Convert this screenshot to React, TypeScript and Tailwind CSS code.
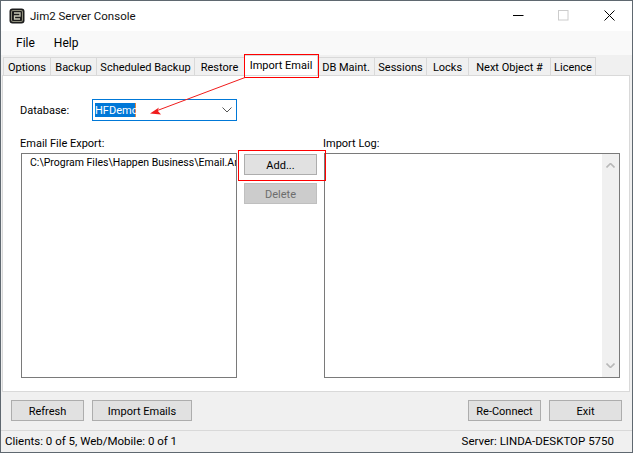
import React from "react";

const tabs = [
  { label: "Options", width: "w-[48px]" },
  { label: "Backup", width: "w-[46px]" },
  { label: "Scheduled Backup", width: "w-[98px]" },
  { label: "Restore", width: "w-[50px]" },
  { label: "Import Email", width: "w-[73px]", active: true },
  { label: "DB Maint.", width: "w-[57px]" },
  { label: "Sessions", width: "w-[52px]" },
  { label: "Locks", width: "w-[42px]" },
  { label: "Next Object #", width: "w-[82px]" },
  { label: "Licence", width: "w-[45px]" },
];

function WinButton({ label, className, disabled }: { label: string; className: string; disabled?: boolean }) {
  return (
    <div
      className={`flex items-center justify-center border pt-[1px] ${
        disabled ? "border-[#bfbfbf] bg-[#cccccc] text-[#6d6d6d]" : "border-[#adadad] bg-[#e1e1e1] text-black"
      } ${className}`}
    >
      {label}
    </div>
  );
}

export default function App() {
  return (
    <div
      className="relative flex h-[453px] w-[633px] flex-col overflow-hidden border border-[#5f6870] bg-white text-[11px] leading-none text-black"
      style={{ fontFamily: 'Roboto, "Noto Sans", sans-serif' }}
    >
      {/* Title bar */}
      <div className="flex h-[30px] shrink-0 items-center bg-white">
        <svg className="ml-[8px] h-[16px] w-[16px]" viewBox="0 0 16 16">
          <rect x="0.5" y="0.5" width="15" height="15" rx="3" fill="#1c1c1c" />
          <rect x="2" y="2" width="12" height="12" rx="2" fill="#8e8e7c" />
          <rect x="3" y="3" width="10" height="10" rx="1" fill="#1c1c1c" />
          <path d="M5 5h6v3H5.5v3H11" fill="none" stroke="#c9c9b6" strokeWidth="1.3" />
        </svg>
        <span className="ml-[5px] pt-[1px] text-[11.5px] text-[#111]">Jim2 Server Console</span>
        <div className="ml-auto flex h-full items-center pb-[2px] text-black">
          <svg className="h-[11px] w-[11px]" viewBox="0 0 11 11">
            <path d="M0 5.5h10.5" stroke="#000" strokeWidth="1" />
          </svg>
          <svg className="ml-[34px] h-[11px] w-[11px]" viewBox="0 0 11 11">
            <rect x="0.5" y="0.5" width="9.5" height="9.5" fill="none" stroke="#cccccc" />
          </svg>
          <svg className="ml-[35px] mr-[17px] h-[11px] w-[11px]" viewBox="0 0 11 11">
            <path d="M0.5 0.5l10 10M10.5 0.5l-10 10" stroke="#000" strokeWidth="1" />
          </svg>
        </div>
      </div>

      {/* Menu bar */}
      <div className="flex h-[24px] shrink-0 items-center gap-[19px] bg-[#f9f9f9] pl-[15px] text-[12px]">
        <span>File</span>
        <span>Help</span>
      </div>

      {/* Tabs */}
      <div className="flex h-[20px] shrink-0 items-end bg-[#f0f0f0] pl-[2px]">
        {tabs.map((tab) => (
          <div
            key={tab.label}
            className={`flex items-center justify-center border-t border-r border-[#d9d9d9] ${tab.width} ${
              tab.active ? "h-[20px] bg-white pb-[1px]" : "h-[18px] bg-[#f0f0f0] pt-[1px]"
            } ${tab.label === "Options" ? "border-l" : ""}`}
          >
            <span className="whitespace-nowrap">{tab.label}</span>
          </div>
        ))}
      </div>

      {/* Page */}
      <div className="flex-1 bg-[#f0f0f0]">
        <div className="mr-[2px] ml-[1px] flex h-[317px] flex-col border border-[#d9d9d9] bg-white">
          <div className="mt-[23px] flex items-center pl-[17px]">
            <span className="w-[72px]">Database:</span>
            <div className="flex h-[22px] w-[145px] items-center border border-[#0078d7] pl-[2px] pr-[4px]">
              <span className="flex h-[14px] w-[41px] items-center border-r border-[#e8853a] bg-[#0078d7] text-white">HFDemo</span>
              <svg className="ml-auto h-[6px] w-[10px]" viewBox="0 0 10 6">
                <path d="M0.5 0.5l4.5 4.5 4.5-4.5" fill="none" stroke="#555" strokeWidth="1" />
              </svg>
            </div>
          </div>

          <div className="mt-[17px] flex h-[12px] pl-[17px]">
            <span className="w-[303px]">Email File Export:</span>
            <span>Import Log:</span>
          </div>

          <div className="mt-[3px] flex items-start pl-[18px]">
            <div className="h-[225px] w-[216px] overflow-hidden border border-[#7a7a7a] pl-[8px] pt-[2px]">
              <span className="block whitespace-nowrap text-[10.5px] leading-[14px]">C:\Program Files\Happen Business\Email.Ar</span>
            </div>
            <div className="ml-[7px] flex w-[73px] flex-col gap-[8px] pt-[1px]">
              <WinButton label="Add..." className="h-[21px]" />
              <WinButton label="Delete" className="h-[21px]" disabled />
            </div>
            <div className="ml-[7px] flex h-[225px] w-[296px] justify-end border border-[#7a7a7a]">
              <div className="flex w-[17px] flex-col items-center justify-between bg-[#f0f0f0] py-[9px]">
                <svg className="h-[5px] w-[9px]" viewBox="0 0 9 5">
                  <path d="M0.5 4.5l4-4 4 4" fill="none" stroke="#b8b8b8" strokeWidth="1.6" />
                </svg>
                <svg className="h-[5px] w-[9px]" viewBox="0 0 9 5">
                  <path d="M0.5 0.5l4 4 4-4" fill="none" stroke="#b8b8b8" strokeWidth="1.6" />
                </svg>
              </div>
            </div>
          </div>
        </div>

        {/* Bottom buttons */}
        <div className="flex h-[38px] items-start pl-[10px] pr-[10px] pt-[8px]">
          <WinButton label="Refresh" className="h-[21px] w-[73px]" />
          <WinButton label="Import Emails" className="ml-[8px] h-[21px] w-[100px]" />
          <WinButton label="Re-Connect" className="ml-auto h-[21px] w-[73px]" />
          <WinButton label="Exit" className="ml-[8px] h-[21px] w-[73px]" />
        </div>

        {/* Status bar */}
        <div className="flex h-[22px] items-center justify-between border-t border-[#d9d9d9] pl-[4px] pr-[18px] pt-[1px] text-[11.5px]">
          <span>Clients: 0 of 5, Web/Mobile: 0 of 1</span>
          <span>Server: LINDA-DESKTOP 5750</span>
        </div>
      </div>

      {/* Annotations */}
      <div className="absolute left-[243px] top-[53px] h-[24px] w-[75px] border border-[#ff0000]" />
      <div className="absolute left-[237px] top-[149px] h-[31px] w-[88px] border border-[#ff0000]" />
      <svg className="absolute left-[-1px] top-[-1px] h-[453px] w-[633px]" viewBox="0 0 633 453" fill="none">
        <path d="M245 77.5L156 111" stroke="#f01c1c" strokeWidth="1" />
        <path d="M150 113.5L159 107.5L157.5 110.5L161 114.5Z" fill="#f01c1c" />
      </svg>
    </div>
  );
}
